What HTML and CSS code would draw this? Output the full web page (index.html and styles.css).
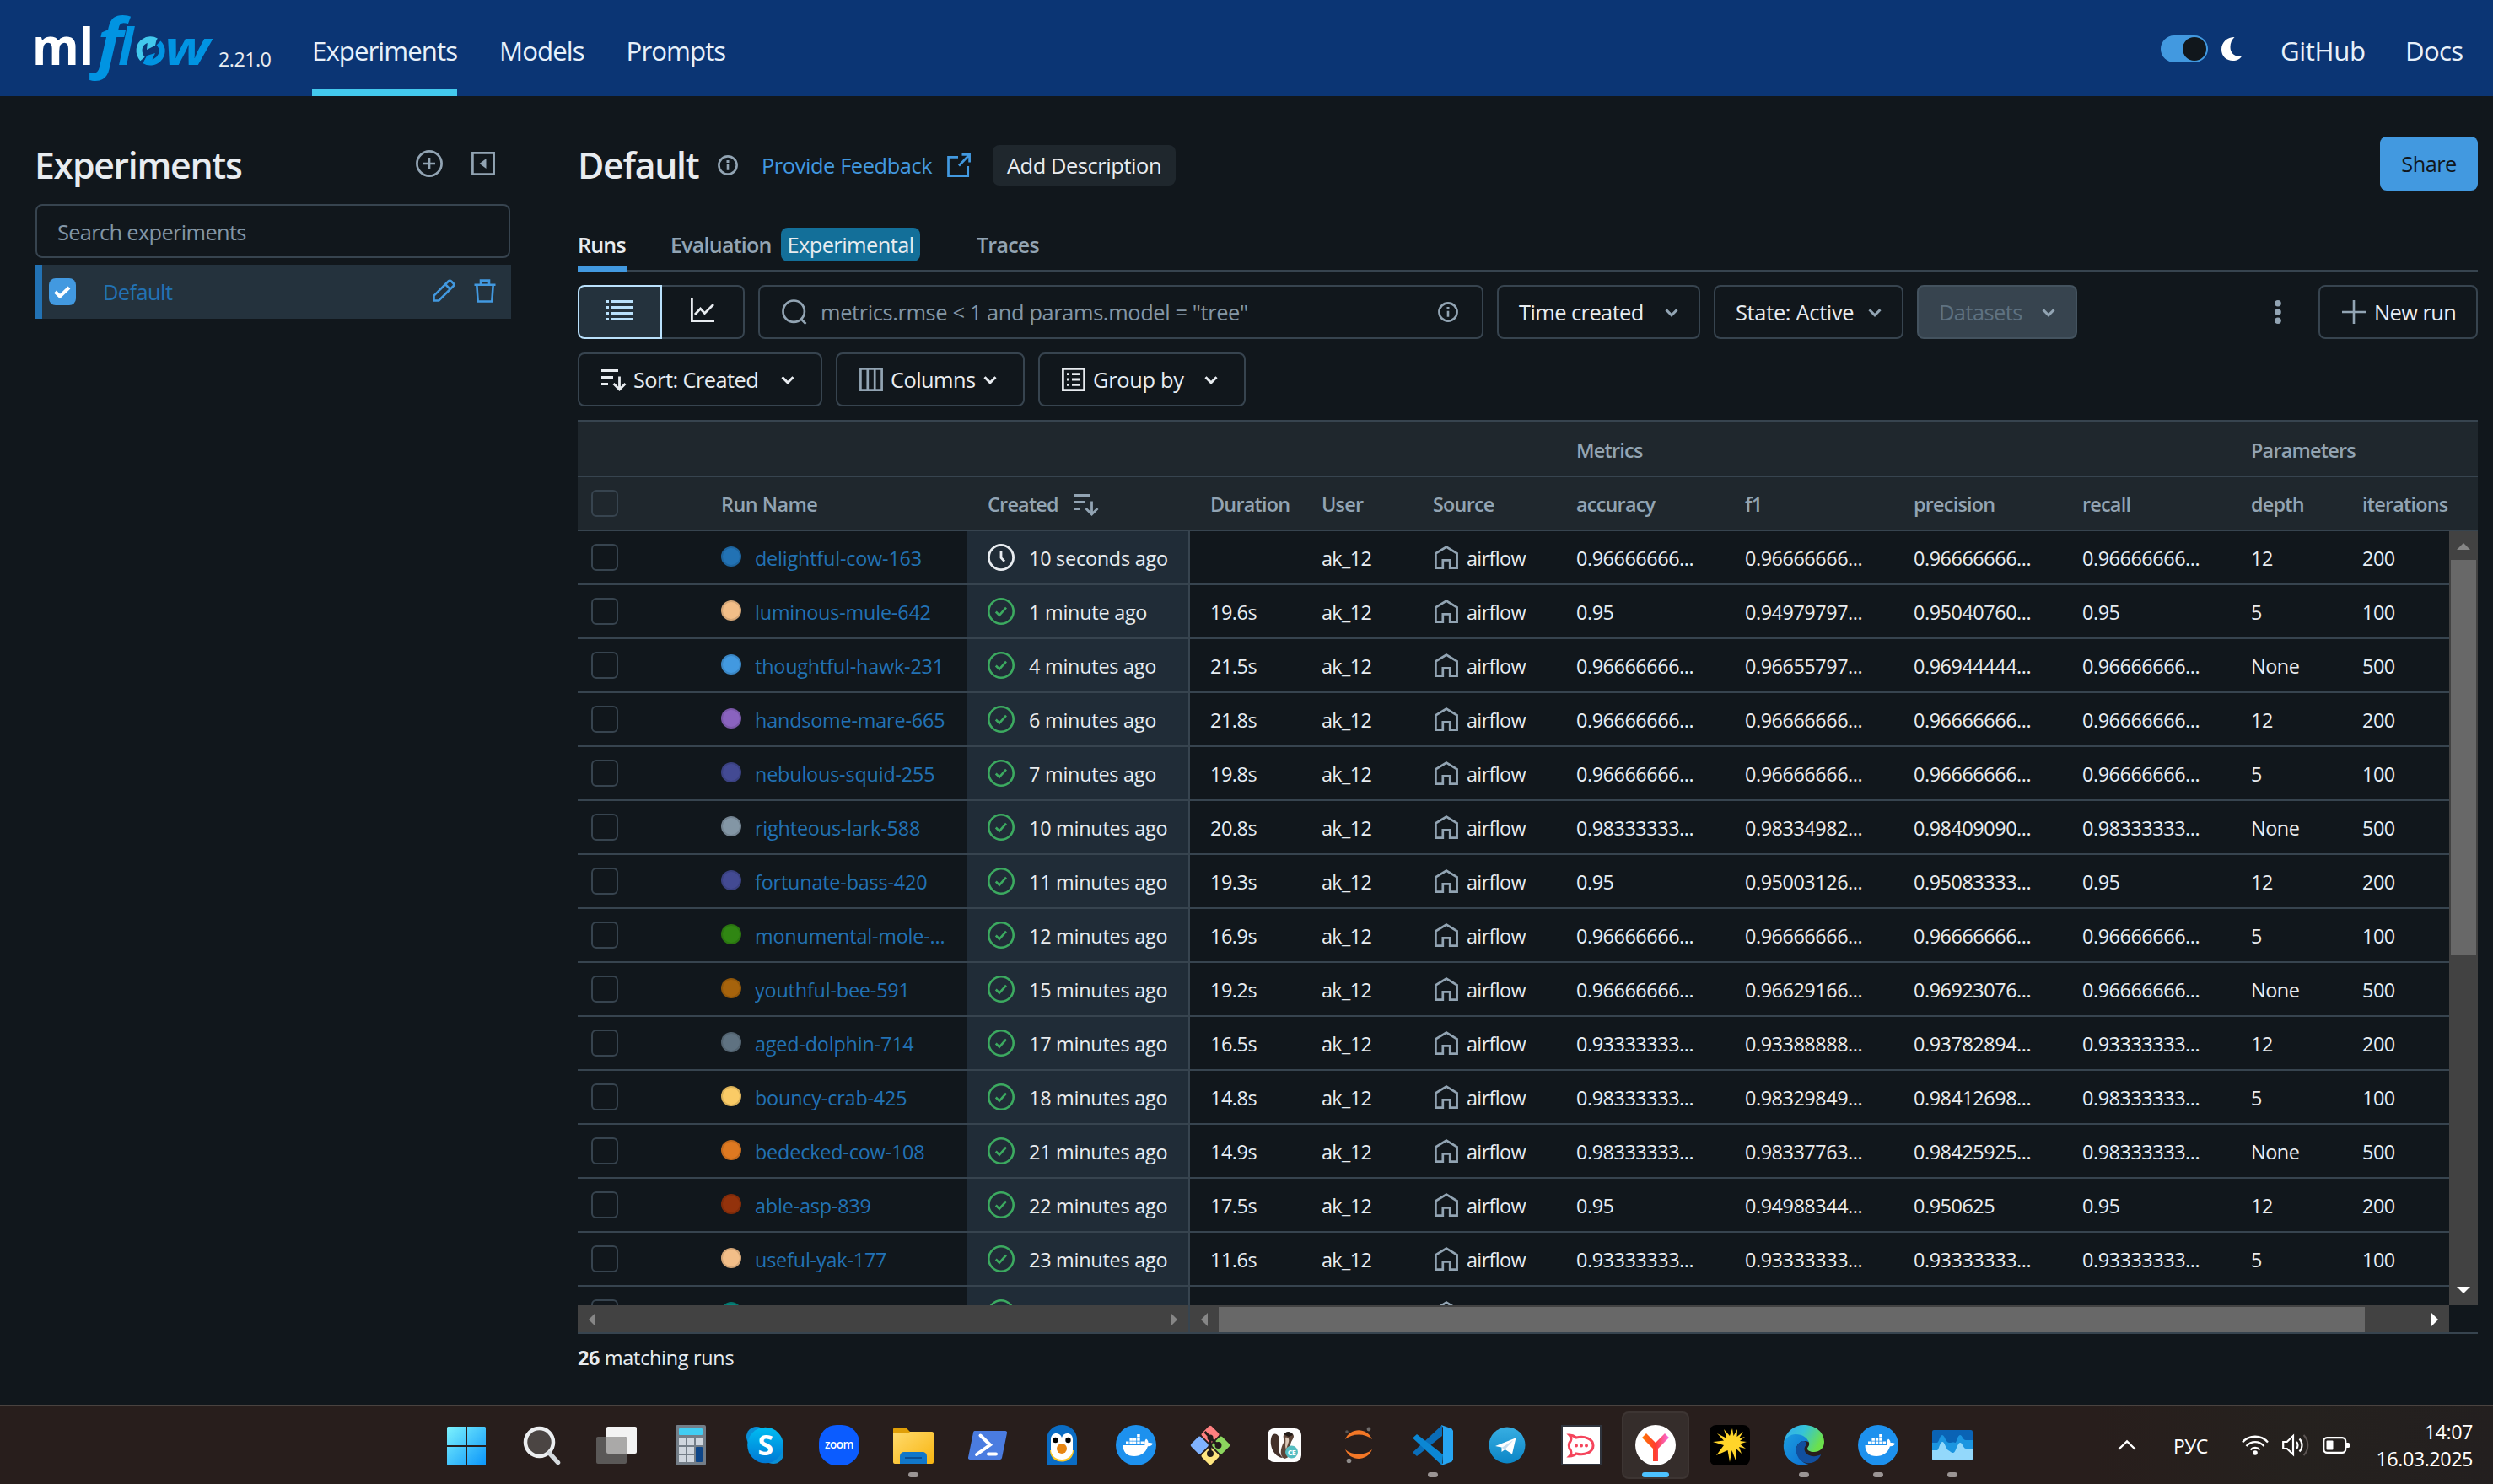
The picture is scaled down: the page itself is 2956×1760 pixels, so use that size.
FILE: index.html
```html
<!DOCTYPE html>
<html lang="en">
<head>
<meta charset="utf-8">
<title>Default - MLflow Experiment</title>
<link rel="stylesheet" href="styles.css">
</head>
<body>
<svg class="sprite" aria-hidden="true">
  <symbol id="chevron" viewBox="0 0 16 12"><path d="M1.500 2.200 8 8.800l6.500-6.600" fill="none" stroke="currentColor" stroke-width="3"/></symbol>
  <symbol id="info" viewBox="0 0 24 24"><circle cx="12" cy="12" r="10.600" fill="none" stroke="currentColor" stroke-width="2.600"/><path d="M10.700 10.700h2.600v7h-2.600zM10.500 6h3v3h-3z" fill="currentColor"/></symbol>
  <symbol id="sort" viewBox="0 0 30 28"><path d="M0 2.500h20M0 10.500h14M0 18.500h8" stroke="currentColor" stroke-width="3" fill="none"/><path d="M21.500 9.500V25M14.500 18l7 7 7-7" stroke="currentColor" stroke-width="2.800" fill="none"/></symbol>
  <symbol id="check-circle" viewBox="0 0 32 32"><circle cx="16" cy="16" r="14.700" fill="none" stroke="currentColor" stroke-width="2.600"/><path d="m9.800 16.500 4.200 4.200 8-9" fill="none" stroke="currentColor" stroke-width="2.600"/></symbol>
  <symbol id="clock" viewBox="0 0 32 32"><circle cx="16" cy="16" r="14.600" fill="none" stroke="currentColor" stroke-width="2.800"/><path d="M16 8v8.500l4 4.200" fill="none" stroke="currentColor" stroke-width="2.800"/></symbol>
  <symbol id="home" viewBox="0 0 28 28"><path d="M1.400 26.600V9.300L14 1.700l12.600 7.600v17.300h-8.400v-9.200h-8.400v9.200z" fill="none" stroke="currentColor" stroke-width="2.700"/></symbol>
  <symbol id="docker" viewBox="0 0 48 48"><circle cx="24" cy="24" r="24" fill="#1d91ee"/><path d="M8.500 24h26c-1-3 0-5.500 1.500-7.500 2 1.300 2.500 3 2.500 4.500 1.800-.3 3.800 0 5.500 1-1.200 2.500-3.500 3.400-6 3.200C35.500 33 29.500 37 22 37c-8.500 0-13.500-4.500-13.500-13z" fill="#fff"/><path d="M12 19.500h3.500v3.500H12zM16.400 19.500h3.500v3.500h-3.500zM20.800 19.500h3.500v3.500h-3.500zM25.200 19.500h3.500v3.500h-3.500zM29.600 19.500h3.500v3.500h-3.500zM16.400 15.300h3.500v3.500h-3.500zM20.800 15.300h3.500v3.500h-3.500zM25.200 15.300h3.500v3.500h-3.500zM25.200 11h3.500v3.500h-3.500z" fill="#fff"/></symbol>
</svg>

<header class="topbar">
  <svg class="logo" viewBox="-20 -14 232 114">
    <g class="logo-text">
      <text x="-4" y="63" font-size="61" fill="#fff" textLength="73" lengthAdjust="spacingAndGlyphs">ml</text>
      <g font-style="italic" fill="#0194e2">
        <text x="73" y="63" font-size="77" textLength="31" lengthAdjust="spacingAndGlyphs">f</text>
        <text x="98" y="63" font-size="61">l</text>
        <text x="153" y="63" font-size="57" textLength="54" lengthAdjust="spacingAndGlyphs">w</text>
      </g>
    </g>
    <path d="M127 56c-6-7-5-17 2-21 4-3 10-3 14-.5" fill="none" stroke="#43c9ed" stroke-width="7"/>
    <path d="M146 37c6 6 5 14 0 19-5 5-12 5-17 2" fill="none" stroke="#0194e2" stroke-width="7"/>
    <path d="m132 45 1-10 11-4-2 9z" fill="#43c9ed"/>
    <path d="m142 49-10 3-4 9 8 1z" fill="#0194e2"/>
  </svg>
  <span class="version">2.21.0</span>
  <nav class="nav">
    <a class="nav-link current">Experiments</a>
    <a class="nav-link">Models</a>
    <a class="nav-link">Prompts</a>
  </nav>
  <div class="top-right">
    <span class="switch"><span class="knob"></span></span>
    <svg class="moon" viewBox="0 0 24 28"><path d="M15.500 0C7 0 0 6 0 14.500S6 28 13.500 28c5 0 9-2 10.500-5.500C16 24 10.500 19 10.500 12c0-5 1.800-9 5-12z" fill="#fff"/></svg>
    <a class="top-link github">GitHub</a>
    <a class="top-link docs">Docs</a>
  </div>
</header>

<div class="page">
  <aside class="sidebar">
    <div class="side-head">
      <h2>Experiments</h2>
      <svg class="ico32" viewBox="0 0 32 32"><circle cx="16" cy="16" r="14.600" fill="none" stroke="currentColor" stroke-width="2.700"/><path d="M16 9v14M9 16h14" stroke="currentColor" stroke-width="2.700"/></svg>
      <svg class="ico28 collapse" viewBox="0 0 28 28"><path d="M1.400 1.400h25.200v25.200H1.400z" fill="none" stroke="currentColor" stroke-width="2.700"/><path d="M17.500 8v12l-8-6z" fill="currentColor"/></svg>
    </div>
    <div class="side-search">Search experiments</div>
    <div class="side-item">
      <span class="checked"><svg viewBox="0 0 32 32"><path d="m7.500 16 5.500 5.500L24 11" fill="none" stroke="#fff" stroke-width="4"/></svg></span>
      <a class="side-name">Default</a>
      <svg class="ico28" viewBox="0 0 28 28"><path d="M2.500 25.500v-5.800L19.700 2.500a2.300 2.300 0 0 1 3.300 0l2.500 2.500a2.300 2.300 0 0 1 0 3.300L8.300 25.500zM16 6.200l5.800 5.800" fill="none" stroke="currentColor" stroke-width="2.600"/></svg>
      <svg class="ico28" viewBox="0 0 28 28"><path d="M1.500 6.700h25M9 6.500V1.600h10v4.900M4.300 6.700l1.400 19.800h16.600l1.400-19.800" fill="none" stroke="currentColor" stroke-width="2.600"/></svg>
    </div>
  </aside>

  <main class="main">
    <div class="title-row">
      <h1>Default</h1>
      <svg class="ico24 title-info"><use href="#info"/></svg>
      <a class="feedback">Provide Feedback</a>
      <svg class="ico28 external" viewBox="0 0 28 28"><path d="M13 4.400H1.500v22.200h23.200V15" fill="none" stroke="currentColor" stroke-width="2.700"/><path d="M17.500 1.400h9.100v9.100M26 2 14 14.500" fill="none" stroke="currentColor" stroke-width="2.700"/></svg>
      <button class="describe">Add Description</button>
      <button class="share">Share</button>
    </div>

    <div class="tabs">
      <span class="tab active">Runs</span>
      <span class="tab evaluation">Evaluation<span class="badge">Experimental</span></span>
      <span class="tab">Traces</span>
    </div>

    <div class="controls">
      <div class="segments">
        <span class="segment on"><svg viewBox="0 0 32 28"><path d="M5.500 3.500H32M5.500 10.500H32M5.500 17.500H32M5.500 24.500H32M0 3.500h3M0 10.500h3M0 17.500h3M0 24.500h3" stroke="currentColor" stroke-width="3"/></svg></span>
        <span class="segment"><svg viewBox="0 0 32 28"><path d="M3.400 0v26.500H30M7 19l6.500-7 5 5.500L29 7" fill="none" stroke="currentColor" stroke-width="2.800"/></svg></span>
      </div>
      <div class="search">
        <svg class="magnifier" viewBox="0 0 30 30"><circle cx="14.200" cy="14.200" r="12.700" fill="none" stroke="currentColor" stroke-width="2.700"/><path d="m22.500 23 6 6" stroke="currentColor" stroke-width="2.700"/></svg>
        <span class="query">metrics.rmse &lt; 1 and params.model = "tree"</span>
        <svg class="ico24"><use href="#info"/></svg>
      </div>
      <button class="btn time">Time created<svg class="chev"><use href="#chevron"/></svg></button>
      <button class="btn state">State: Active<svg class="chev"><use href="#chevron"/></svg></button>
      <button class="btn datasets">Datasets<svg class="chev"><use href="#chevron"/></svg></button>
      <svg class="kebab" viewBox="0 0 8 28"><circle cx="4" cy="3.800" r="3.800"/><circle cx="4" cy="14" r="3.800"/><circle cx="4" cy="24.200" r="3.800"/></svg>
      <button class="btn newrun"><svg class="ico28" viewBox="0 0 28 28"><path d="M14 0v28M0 14h28" stroke="currentColor" stroke-width="2.600"/></svg>New run</button>
    </div>

    <div class="controls second">
      <button class="btn sortby"><svg class="sort"><use href="#sort"/></svg>Sort: Created<svg class="chev bright"><use href="#chevron"/></svg></button>
      <button class="btn columns"><svg class="ico28" viewBox="0 0 28 28"><path d="M1.400 1.400h25.200v25.200H1.400zM9.800 1v26M18.200 1v26" fill="none" stroke="currentColor" stroke-width="2.700"/></svg>Columns<svg class="chev bright"><use href="#chevron"/></svg></button>
      <button class="btn groupby"><svg class="ico28 bright" viewBox="0 0 28 28"><path d="M1.400 1.400h25.200v25.200H1.400z" fill="none" stroke="currentColor" stroke-width="2.700"/><path d="M6 7.700h3M12 7.700h10M6 14h3M12 14h10M6 20.300h3M12 20.300h10" stroke="currentColor" stroke-width="2.800"/></svg>Group by<svg class="chev bright"><use href="#chevron"/></svg></button>
    </div>

    <section class="table">
      <div class="grid groups"><span class="cell metrics">Metrics</span><span class="cell params">Parameters</span></div>
      <div class="grid heads">
        <span class="cell pick"><span class="box"></span></span>
        <span class="cell name">Run Name</span>
        <span class="cell">Created<svg class="sort"><use href="#sort"/></svg></span>
        <span class="cell">Duration</span><span class="cell">User</span><span class="cell">Source</span>
        <span class="cell">accuracy</span><span class="cell">f1</span><span class="cell">precision</span><span class="cell">recall</span>
        <span class="cell">depth</span><span class="cell">iterations</span>
      </div>
      <div class="viewport">
        <div class="rows" id="rows"></div>
        <div class="vbar">
          <svg class="arrow-v" viewBox="0 0 16 8"><path d="M0 8h16L8 0z" fill="#868686"/></svg>
          <span class="vthumb"></span>
          <svg class="arrow-v" viewBox="0 0 16 8"><path d="M0 0h16L8 8z" fill="#fff"/></svg>
        </div>
      </div>
      <div class="hbars">
        <div class="hbar pinned">
          <svg class="arrow-h" viewBox="0 0 8 16"><path d="M8 0v16L0 8z" fill="#868686"/></svg>
          <svg class="arrow-h" viewBox="0 0 8 16"><path d="M0 0v16l8-8z" fill="#868686"/></svg>
        </div>
        <div class="hbar scroll">
          <svg class="arrow-h" viewBox="0 0 8 16"><path d="M8 0v16L0 8z" fill="#868686"/></svg>
          <span class="hthumb"></span>
          <svg class="arrow-h" viewBox="0 0 8 16"><path d="M0 0v16l8-8z" fill="#fff"/></svg>
        </div>
      </div>
    </section>
    <p class="count"><b>26</b> matching runs</p>
  </main>
</div>

<footer class="taskbar">
  <div class="apps">
    <span class="app"><svg viewBox="0 0 48 48"><defs><linearGradient id="win" x1="0" y1="0" x2="1" y2="1"><stop offset="0" stop-color="#7df3fd"/><stop offset="1" stop-color="#0a95fa"/></linearGradient></defs><path d="M-1 3.500A1.500 1.500 0 0 1 .5 2H21v22H-1zM23 2h20.500A1.500 1.500 0 0 1 45 3.500V24H23zM-1 26h22v22H.5A1.500 1.500 0 0 1-1 46.500zM23 26h22v20.500a1.500 1.500 0 0 1-1.500 1.500H23z" fill="url(#win)"/></svg></span>
    <span class="app"><svg viewBox="0 0 48 48"><circle cx="20.500" cy="20.500" r="16.500" fill="#4b4543" stroke="#eceef0" stroke-width="4.500"/><path d="m32.500 33.500 10 11" stroke="#d5dade" stroke-width="5.500" stroke-linecap="round"/></svg></span>
    <span class="app"><svg viewBox="0 0 48 48"><rect x="12" y="2" width="36" height="32" rx="2" fill="#f3f3f3"/><rect y="14" width="36" height="32" rx="2" fill="#5a5857"/><path d="M12 14h22a2 2 0 0 1 2 2v18H14a2 2 0 0 1-2-2z" fill="#aaa9a8"/></svg></span>
    <span class="app"><svg viewBox="0 0 48 48"><rect x="6" width="36" height="48" rx="2" fill="#747e88"/><rect x="10" y="4" width="28" height="8" rx="1" fill="#41cdf2"/><path d="M10 16h8v8h-8zM20 16h8v8h-8zM30 16h8v8h-8zM10 26h8v8h-8zM20 26h8v8h-8zM10 36h8v8h-8zM20 36h8v8h-8z" fill="#cfd6de"/><rect x="30" y="26" width="8" height="18" rx="1" fill="#0d4689"/></svg></span>
    <span class="app"><svg viewBox="0 0 48 48"><defs><linearGradient id="sky" x1="0" y1="0" x2="0" y2="1"><stop offset="0" stop-color="#00bdf2"/><stop offset="1" stop-color="#0078d4"/></linearGradient></defs><circle cx="14" cy="14" r="12" fill="#0a8fd6"/><circle cx="34" cy="34" r="12" fill="#0a8fd6"/><circle cx="24.500" cy="24" r="21.300" fill="url(#sky)"/><text x="24.500" y="36" font-size="34" font-weight="700" fill="#fff" text-anchor="middle">S</text></svg></span>
    <span class="app"><svg viewBox="0 0 48 48"><rect width="48" height="48" rx="21" fill="#0b5cff"/><text x="24" y="27.500" font-size="15" font-weight="600" fill="#fff" text-anchor="middle" textLength="34" lengthAdjust="spacingAndGlyphs">zoom</text></svg></span>
    <span class="app run"><svg viewBox="0 0 48 48"><defs><linearGradient id="fold" x1="0" y1="0" x2="1" y2="1"><stop offset="0" stop-color="#ffdb6d"/><stop offset="1" stop-color="#f8b511"/></linearGradient></defs><path d="M0 5a2 2 0 0 1 2-2h13l5 5v6H0z" fill="#e09f07"/><path d="M0 10h18l2-2h26a2 2 0 0 1 2 2v34a2 2 0 0 1-2 2H2a2 2 0 0 1-2-2z" fill="url(#fold)"/><path d="M8 46V37a5 5 0 0 1 5-5h22a5 5 0 0 1 5 5v9z" fill="#1177ca"/><path d="M14 39h20" stroke="#0c4f93" stroke-width="2"/></svg></span>
    <span class="app"><svg viewBox="0 0 48 48"><path d="M8.500 7H45a2 2 0 0 1 2 2.500L41 39a2.500 2.500 0 0 1-2.500 2H3a2 2 0 0 1-2-2.500L7 9a2 2 0 0 1 1.500-2z" fill="#4a7ce0"/><path d="m15.500 12.500 11.500 11-16 11.500M25 34.500h9" fill="none" stroke="#fff" stroke-width="4" stroke-linecap="round"/></svg></span>
    <span class="app"><svg viewBox="0 0 48 48"><path d="M6 17a18 17 0 0 1 36 0v29a2 2 0 0 1-2 2H8a2 2 0 0 1-2-2z" fill="#0a6cc4"/><path d="M10 30c0 18 28 18 28 0z" fill="#fcc521"/><path d="M11 17c0-9 11-9 13-2 2-7 13-7 13 2v12c0 16-26 16-26 0z" fill="#fff"/><circle cx="16.500" cy="18" r="3.200"/><circle cx="31.500" cy="18" r="3.200"/><circle cx="24" cy="28" r="6" fill="#e78512"/></svg></span>
    <span class="app"><svg><use href="#docker"/></svg></span>
    <span class="app"><svg viewBox="0 0 48 48"><g transform="rotate(45 24 24)"><rect x="7" y="7" width="16" height="16" rx="2" fill="#ff8080"/><rect x="25" y="7" width="16" height="16" rx="2" fill="#8cd65e"/><rect x="7" y="25" width="16" height="16" rx="2" fill="#80b3ff"/><rect x="25" y="25" width="16" height="16" rx="2" fill="#ffe680"/></g><path d="M17.500 8 24 15v19M24 15l9 9" fill="none" stroke="#231b1a" stroke-width="3"/><circle cx="24" cy="15" r="3.500" fill="#231b1a"/><circle cx="33.500" cy="24" r="4" fill="#231b1a"/><circle cx="24" cy="34" r="4" fill="#231b1a"/></svg></span>
    <span class="app"><svg viewBox="0 0 48 48"><rect x="4" y="4" width="40" height="40" rx="8" fill="#fdfdfd"/><path d="M9 13c3-5 9-2 9 5 0 8-3 13 4 21-11-1-17-16-13-26z" fill="#433029"/><path d="M23 12c3-5 11-4 12 1 0 4-4 6-4 12 0 8 3 12-7 15-7-3-4-14-1-19 1-3-1-6 0-9z" fill="#5b4337"/><path d="M23 11c3-4 9-4 11 1l-5 2z" fill="#231b17"/><path d="M25 15c3-1 5 1 4 5l-3 9c-2-4 0-8-1-14z" fill="#d9c7b6"/><circle cx="32.500" cy="32" r="7.500" fill="#54bcc0"/><text x="32.500" y="35.500" font-size="9" font-weight="700" fill="#fff" text-anchor="middle">CE</text></svg></span>
    <span class="app"><svg viewBox="0 0 48 48"><path d="M8 17c6-14.500 26-14.500 32 0-8-7.500-24-7.500-32 0zM8 29c8 7.500 24 7.500 32 0-6 14.500-26 14.500-32 0z" fill="#f37726"/><circle cx="36" cy="5" r="2.400" fill="#6f6c6b"/><circle cx="10" cy="8" r="1.800" fill="#5b5857"/><circle cx="12.500" cy="42.500" r="2.800" fill="#8f8c8b"/></svg></span>
    <span class="app run"><svg viewBox="0 0 48 48"><path d="M0 32.500 35 0v13L5 37z" fill="#0a6db8"/><path d="M0 15.500 5 11l31 24-1 13z" fill="#0b87d4"/><path d="m34 0 12.500 4.500L48 7v34l-1.500 2.500L34 48l2-3V3z" fill="#27a5f2"/></svg></span>
    <span class="app"><svg viewBox="0 0 48 48"><defs><linearGradient id="tg" x1="0" y1="0" x2="0" y2="1"><stop offset="0" stop-color="#37aee2"/><stop offset="1" stop-color="#0b85c6"/></linearGradient></defs><circle cx="24" cy="24" r="21.500" fill="url(#tg)"/><path d="m10 25 24.500-9.800-4.500 19.300-8.500-5.500-4 3v-5.500z" fill="#fff"/><path d="m17.500 27 14-9-10 11z" fill="#c5def0"/></svg></span>
    <span class="app"><svg viewBox="0 0 48 48"><rect x="1" y="1" width="46" height="46" fill="#fff" stroke="#2f343d" stroke-width="2"/><path d="M10 12c4 0 6 1.500 8 3 10-2.500 20 1.500 20 9.500s-10 12-20 9.500c-2 2-4 3-8 3 2-2 2.500-4 1.500-6.500-3-4-3-8 0-12C12.500 16 12 14 10 12z" fill="none" stroke="#f5455c" stroke-width="3"/><circle cx="18" cy="24.500" r="2" fill="#f5455c"/><circle cx="24" cy="24.500" r="2" fill="#f5455c"/><circle cx="30" cy="24.500" r="2" fill="#f5455c"/></svg></span>
    <span class="app focused"><svg viewBox="0 0 48 48"><defs><linearGradient id="ya" x1="0" y1="0" x2="1" y2="0"><stop offset="0" stop-color="#ff7a00"/><stop offset=".5" stop-color="#ff3b30"/><stop offset="1" stop-color="#f970e8"/></linearGradient></defs><circle cx="24" cy="24" r="24" fill="#fff"/><path d="m8 15 5-5 11 11 11-11 5 5-13 13v15h-6V28z" fill="url(#ya)"/></svg></span>
    <span class="app"><svg viewBox="0 0 48 48"><rect width="48" height="48" rx="8"/><path d="m27 4 1.500 9L33 5l-.5 9L40 8l-5 8 7-2-6 5 8 1-8 2.500 7 5.500-8-2 3 8-6.500-6L31 42l-4.500-12L24 44l-2.500-14L8 36l9-12L4 20l13-1.500L9 10l11.500 6L17 5l7 8z" fill="#ffd42a"/></svg></span>
    <span class="app run"><svg viewBox="0 0 48 48"><defs><linearGradient id="ed" x1="0" y1="0" x2="1" y2=".4"><stop offset="0" stop-color="#31a8f0"/><stop offset=".5" stop-color="#35c3d8"/><stop offset="1" stop-color="#6be04c"/></linearGradient><linearGradient id="ed2" x1="0" y1="0" x2="1" y2="1"><stop offset="0" stop-color="#1b9de0"/><stop offset="1" stop-color="#0d6fd1"/></linearGradient></defs><path d="M0 21C2 8 12 0 24 0c14 0 24 9 24 20 0 8-6 12-12 12-5 0-8-2-8-4s3-3 2-7c-2-6-20-9-30 0z" fill="url(#ed)"/><path d="M0 22c2-7 8-11 14-11 8 0 14 4 15.500 9-10-4-17 5-14 13 3 9 9 13 14 13.500C14 51-2 40 0 22z" fill="url(#ed2)"/><path d="M22 19c-8 3-9 12-5 19 4 8 16 10 23 3 3-3 4-5 4-6-7 4-16 2-18.500-3C23.500 28 25 25 27 24c1-3-1-5-5-5z" fill="#114f9e"/></svg></span>
    <span class="app run"><svg><use href="#docker"/></svg></span>
    <span class="app run"><svg viewBox="0 0 48 48"><defs><clipPath id="mon"><rect y="6" width="48" height="36" rx="2"/></clipPath></defs><g clip-path="url(#mon)"><path d="M0 6h48v36H0z" fill="#0a63b5"/><path d="M0 21h6c2 0 3-9 6-9s4 9 8 9 5-1 7 0 3-9 6-9 3 6 7 6h8v24H0z" fill="#1b95e0"/><path d="M0 30h6c2 0 3-10 6-10s4 8 7 10c3 1 3 3 6 3s5-12 8-12 4 7 7 7h8v14H0z" fill="#93d8fb"/></g></svg></span>
  </div>
  <div class="tray">
    <svg class="tray-up" viewBox="0 0 22 12"><path d="m1 11 10-9.500L21 11" fill="none" stroke="#fff" stroke-width="2.400"/></svg>
    <span class="lang">РУС</span>
    <svg class="tray-ico" viewBox="0 0 32 28"><g fill="none" stroke="#fff" stroke-width="2.300"><path d="M1 10.500c8-9 22-9 30 0M5.500 15c6-6.500 15-6.500 21 0M10.500 19.500c3-3.500 8-3.500 11 0"/></g><circle cx="16" cy="23" r="2.800" fill="#fff"/></svg>
    <svg class="tray-ico vol" viewBox="0 0 32 28"><path d="M1.200 10h4.500L13 3v22l-7.300-7H1.200z" fill="none" stroke="#fff" stroke-width="2.200"/><path d="M17 10c2 2 2 6 0 8M20.500 6.500c4 4 4 11 0 15" fill="none" stroke="#fff" stroke-width="2.200"/><path d="M25.500 2c6.500 6.500 6.500 17.500 0 24" fill="none" stroke="#5b5452" stroke-width="2"/></svg>
    <svg class="tray-ico" viewBox="0 0 32 28"><rect x="1.200" y="5.200" width="26" height="17.600" rx="4" fill="none" stroke="#fff" stroke-width="2.300"/><rect x="4.500" y="8.500" width="8" height="11" rx="1" fill="#fff"/><path d="M28 11h2.500a1.500 1.500 0 0 1 1.500 1.500v3a1.500 1.500 0 0 1-1.500 1.500H28z" fill="#fff"/></svg>
    <div class="clock"><span>14:07</span><span>16.03.2025</span></div>
  </div>
</footer>
<script src="runs.js"></script>
</body>
</html>
```
FILE: styles.css
```css
* { box-sizing: border-box; }

:root {
  --bg: #11171c;
  --line: #37444f;
  --text: #e8ecf0;
  --muted: #92a4b3;
  --link: #2272b4;
  --accent: #4299e0;
}

body {
  margin: 0;
  width: 2956px;
  height: 1760px;
  overflow: hidden;
  display: flex;
  flex-direction: column;
  background: var(--bg);
  color: var(--text);
  font: 25.4px/1.3 "Open Sans", "Noto Sans", sans-serif;
  letter-spacing: -0.022em;
  white-space: nowrap;
}

svg { display: block; flex: none; overflow: visible; }
.sprite { position: absolute; width: 0; height: 0; }
.ico24 { width: 24px; height: 24px; color: var(--muted); }
.ico28 { width: 28px; height: 28px; }
.ico32 { width: 32px; height: 32px; }
h1, h2, p { margin: 0; }
h1, h2 { font-size: 42.8px; font-weight: 600; line-height: 60px; letter-spacing: -0.03em; }
button { font: inherit; letter-spacing: inherit; color: inherit; margin: 0; }

/* top bar */
.topbar { height: 114px; flex: none; display: flex; background: #0b3574; padding-left: 22px; }
.logo { width: 232px; height: 114px; }
.logo-text { font-weight: 700; letter-spacing: 0; }
.version { font-size: 23.4px; line-height: 30px; margin: 55px 0 0 5px; width: 69px; letter-spacing: -0.024em; }
.nav { display: flex; gap: 50px; margin-left: 42px; }
.nav-link, .top-link { font-size: 31.200px; line-height: 42px; padding-top: 39px; letter-spacing: -0.03em; color: #e7f1fb; }
.nav-link { height: 114px; }
.nav-link.current { border-bottom: 8px solid #43c9ed; }
.top-right { display: flex; margin-left: auto; padding-right: 33px; }
.switch { width: 56px; height: 32px; margin-top: 42px; border-radius: 16px; background: var(--accent); display: flex; justify-content: flex-end; padding: 2px; }
.knob { width: 28px; height: 28px; border-radius: 50%; background: var(--bg); }
.moon { width: 24px; height: 28px; margin: 44px 46px 0 16px; }
.github { width: 101px; margin-right: 47px; letter-spacing: -0.012em; }
.docs { width: 71px; letter-spacing: -0.022em; }

/* page */
.page { flex: 1; min-height: 0; display: flex; }
.sidebar { width: 564px; margin-left: 42px; padding-top: 50px; flex: none; }
.side-head { display: flex; align-items: center; height: 60px; color: var(--muted); }
.side-head h2 { flex: 1; color: var(--text); padding: 3px 0 0; margin-left: -1px; }
.collapse { margin: 0 19px 0 34px; }
.side-search { margin: 18px 1px 0 0; height: 64px; border: 2px solid var(--line); border-radius: 8px; padding-left: 24px; line-height: 62px; color: #8396a5; letter-spacing: -0.026em; }
.side-item { margin-top: 8px; height: 64px; display: flex; align-items: center; background: #24323d; border-left: 8px solid var(--link); padding: 0 17px 0 8px; color: var(--accent); gap: 21px; }
.side-item > svg { margin-bottom: 2px; }
.checked { width: 32px; height: 32px; border-radius: 8px; background: var(--accent); }
.side-name { flex: 1; color: var(--link); margin-left: 11px; padding-top: 2px; }

.main { width: 2253px; margin-left: 79px; padding-top: 48px; }
.title-row { height: 64px; display: flex; align-items: center; }
.title-row h1 { width: 150px; padding: 3px 0 0; }
.title-info { margin: 4px 0 0 16px; }
.feedback { color: var(--accent); margin-left: 28px; width: 203px; padding-top: 5px; letter-spacing: -0.016em; }
.external { color: var(--accent); margin: 3px 26px 0 17px; }
.describe { width: 217px; height: 48px; margin-top: 4px; border: 0; border-radius: 8px; background: #1f272d; padding: 1px 0 0; letter-spacing: -0.016em; }
.share { width: 116px; height: 64px; margin-left: auto; border: 0; border-radius: 8px; background: var(--accent); color: var(--bg); padding: 1px 0 0; }

.tabs { height: 62px; margin-top: 34px; display: flex; border-bottom: 2px solid var(--line); color: var(--muted); font-weight: 600; font-size: 25px; letter-spacing: -0.03em; }
.tab { line-height: 40px; padding-top: 10px; display: flex; height: 62px; }
.tab.active { color: var(--text); border-bottom: 6px solid var(--accent); width: 58px; }
.evaluation { margin: 0 67px 0 52px; width: 296px; }
.badge { margin-left: auto; width: 165px; height: 40px; line-height: 40px; text-align: center; border-radius: 8px; background: #136f99; color: var(--text); font-weight: 400; font-size: 25.4px; letter-spacing: -0.022em; }

.controls { display: flex; gap: 16px; margin-top: 16px; height: 64px; }
.segments { display: flex; width: 198px; }
.segment { flex: 1; border: 2px solid var(--line); border-left: 0; border-radius: 0 8px 8px 0; display: grid; place-items: center; }
.segment svg { width: 32px; height: 28px; margin-bottom: 4px; }
.segment.on { flex: none; width: 100px; border: 2px solid #bae1fc; border-radius: 8px 0 0 8px; background: #24323d; color: #bae1fc; }
.search { width: 860px; border: 2px solid var(--line); border-radius: 8px; display: flex; align-items: center; padding: 0 28px 0 26px; color: var(--muted); }
.magnifier { width: 30px; height: 30px; }
.query { flex: 1; margin-left: 16px; padding-top: 2px; color: #8396a5; letter-spacing: -0.015em; }
.btn { height: 64px; border: 2px solid var(--line); border-radius: 8px; background: none; display: flex; align-items: center; padding: 1px 24px 0; }
.chev { width: 16px; height: 12px; margin-left: auto; color: var(--muted); }
.time { width: 241px; }
.state { width: 225px; letter-spacing: -0.012em; }
.datasets { width: 190px; background: var(--line); border-color: #44535f; color: #5f7281; }
.kebab { width: 8px; height: 28px; margin: 18px 28px 0 auto; fill: var(--muted); }
.newrun { width: 189px; padding: 1px 0 0 26px; gap: 10px; }
.btn .ico28 { color: var(--muted); margin-top: -2px; }
.btn .bright { color: var(--text); }
.sort { width: 30px; height: 28px; }
.sortby { width: 290px; padding: 1px 31px 0 26px; }
.sortby .sort { margin-right: 8px; }
.columns { width: 224px; padding: 1px 31px 0 26px; }
.columns .ico28 { margin-right: 9px; }
.groupby { width: 246px; padding: 1px 31px 0 26px; letter-spacing: -0.012em; }
.groupby .ico28 { margin-right: 9px; }

/* runs table */
.table { margin-top: 16px; border-top: 2px solid var(--line); border-bottom: 2px solid var(--line); font-size: 23.4px; letter-spacing: -0.027em; }
.grid { display: grid; grid-template-columns: 170px 292px 264px 132px 132px 170px 200px 200px 200px 200px 132px 127px; }
.cell { display: flex; align-items: center; padding-left: 24px; }
.cell.pick { padding-left: 16px; }
.cell.name { padding-left: 0; }
.groups, .heads { background: #1f272d; color: var(--muted); font-weight: 600; border-bottom: 2px solid var(--line); letter-spacing: -0.033em; }
.groups { height: 66px; }
.groups .cell { padding-top: 4px; align-items: center; }
.heads { height: 64px; }
.heads .cell:not(.pick) { padding-top: 3px; }
.heads .name { letter-spacing: -0.022em; }
.heads .sort { margin: 0 0 0 18px; }
.metrics { grid-column: 7 / 11; }
.params { grid-column: 11 / 13; }
.box { width: 32px; height: 32px; border: 2px solid var(--line); border-radius: 6px; }

.viewport { height: 918px; display: flex; overflow: hidden; }
.rows { width: 2219px; }
.rows .grid { height: 64px; }
.rows .cell { border-bottom: 2px solid var(--line); padding-top: 3px; }
.rows .pick { padding-top: 0; }
.rows .num { letter-spacing: -0.019em; }
.dot { width: 24px; height: 24px; border-radius: 50%; margin: -5px 17px 0 0; border: 2px solid rgba(0, 0, 0, 0.12); }
.run-link { color: var(--link); overflow: hidden; letter-spacing: -0.008em; margin-left: -1px; }
.rows .created { background: #202c37; border-right: 2px solid var(--line); color: var(--text); letter-spacing: -0.01em; }
.status { width: 32px; height: 32px; margin: -3px 17px 0 0; color: #3caa60; }
.status.pending { color: var(--text); }
.home { width: 28px; height: 28px; margin: -4px 10px 0 2px; color: var(--muted); }

.vbar { width: 34px; background: #424242; display: flex; flex-direction: column; align-items: center; padding: 14px 0; }
.arrow-v { width: 16px; height: 8px; }
.vthumb { width: 30px; height: 469px; margin: 12px 0 auto; background: #686868; }
.hbars { display: flex; height: 32px; }
.hbar { background: #424242; display: flex; align-items: center; justify-content: space-between; padding: 2px 13px 0; }
.pinned { width: 726px; border-right: 2px solid var(--line); }
.scroll { width: 1493px; }
.arrow-h { width: 8px; height: 16px; }
.hthumb { width: 1359px; height: 30px; margin: 0 auto 0 13px; background: #686868; }
.count { font-size: 23.4px; line-height: 32px; margin-top: 12px; letter-spacing: -0.012em; }
.count b { font-weight: 700; }

/* taskbar */
.taskbar { height: 94px; flex: none; border-top: 2px solid #4a4340; background: linear-gradient(90deg, #281e1c 0, #281e1c 84%, #25211e 92%, #231f1f 100%); display: flex; justify-content: space-between; padding: 0 25px 0 511px; }
.apps { display: flex; }
.app { width: 88px; height: 92px; display: flex; flex-direction: column; align-items: center; padding-top: 22px; }
.app svg { width: 48px; height: 48px; }
.app.run::after, .app.focused::after { content: ""; width: 12px; height: 6px; border-radius: 3px; background: #9b9594; margin-top: 8px; }
.app.focused { width: 80px; height: 80px; margin: 6px 4px 0; padding-top: 14px; background: #352d2b; border: 2px solid #3d3533; border-radius: 8px; }
.app.focused::after { width: 32px; background: #4cc2ff; flex: none; }
.tray { display: flex; align-items: center; color: #fff; font-size: 23.4px; }
.tray-up { width: 22px; height: 12px; margin-right: 44px; }
.lang { width: 42px; margin-right: 39px; padding-top: 3px; font-size: 23px; letter-spacing: -0.03em; }
.tray-ico { width: 32px; height: 28px; }
.vol { margin: 0 16px; }
.clock { width: 120px; margin: -1px -1px 0 26px; display: flex; flex-direction: column; text-align: right; line-height: 32px; letter-spacing: -0.02em; }
```
FILE: runs.js
```js
const T = "0.96666666...";
const U = "0.98333333...";
const V = "0.93333333...";

// [color, name, created, duration, accuracy, f1, precision, recall, depth, iterations]
const runs = [
  ["#2272b4", "delightful-cow-163", "10 seconds ago", "", T, T, T, T, "12", "200"],
  ["#f2be88", "luminous-mule-642", "1 minute ago", "19.6s", "0.95", "0.94979797...", "0.95040760...", "0.95", "5", "100"],
  ["#4299e0", "thoughtful-hawk-231", "4 minutes ago", "21.5s", T, "0.96655797...", "0.96944444...", T, "None", "500"],
  ["#8a63bf", "handsome-mare-665", "6 minutes ago", "21.8s", T, T, T, T, "12", "200"],
  ["#434a93", "nebulous-squid-255", "7 minutes ago", "19.8s", T, T, T, T, "5", "100"],
  ["#8396a5", "righteous-lark-588", "10 minutes ago", "20.8s", U, "0.98334982...", "0.98409090...", U, "None", "500"],
  ["#434a93", "fortunate-bass-420", "11 minutes ago", "19.3s", "0.95", "0.95003126...", "0.95083333...", "0.95", "12", "200"],
  ["#308613", "monumental-mole-...", "12 minutes ago", "16.9s", T, T, T, T, "5", "100"],
  ["#a6630c", "youthful-bee-591", "15 minutes ago", "19.2s", T, "0.96629166...", "0.96923076...", T, "None", "500"],
  ["#5f7281", "aged-dolphin-714", "17 minutes ago", "16.5s", V, "0.93388888...", "0.93782894...", V, "12", "200"],
  ["#facb66", "bouncy-crab-425", "18 minutes ago", "14.8s", U, "0.98329849...", "0.98412698...", U, "5", "100"],
  ["#de7921", "bedecked-cow-108", "21 minutes ago", "14.9s", U, "0.98337763...", "0.98425925...", U, "None", "500"],
  ["#93320b", "able-asp-839", "22 minutes ago", "17.5s", "0.95", "0.94988344...", "0.950625", "0.95", "12", "200"],
  ["#f2be88", "useful-yak-177", "23 minutes ago", "11.6s", V, V, V, V, "5", "100"],
  ["#04867d", "", "", "", "", "", "", "", "", ""]
];

document.getElementById("rows").innerHTML = runs.map((run, i) => {
  const [color, name, created, duration, ...values] = run;
  const icon = i === 0 ? "clock" : "check-circle";
  return `<div class="grid">
    <span class="cell pick"><span class="box"></span></span>
    <span class="cell name"><span class="dot" style="background-color:${color}"></span><a class="run-link">${name}</a></span>
    <span class="cell created"><svg class="status ${i === 0 ? "pending" : ""}"><use href="#${icon}"/></svg>${created}</span>
    <span class="cell num">${duration}</span>
    <span class="cell">${name ? "ak_12" : ""}</span>
    <span class="cell"><svg class="home"><use href="#home"/></svg>${name ? "airflow" : ""}</span>
    ${values.map(v => `<span class="cell num">${v}</span>`).join("")}
  </div>`;
}).join("");
```
